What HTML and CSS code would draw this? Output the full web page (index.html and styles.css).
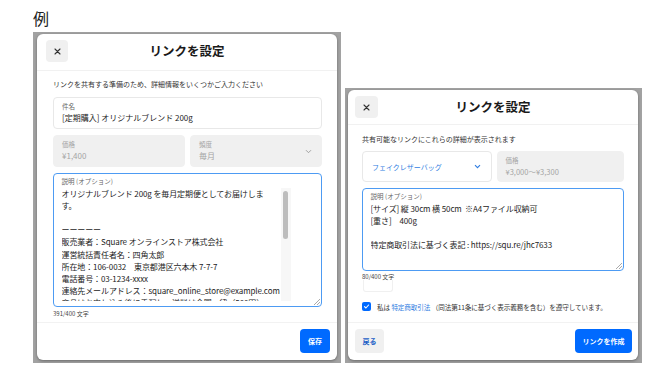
FILE: index.html
```html
<!DOCTYPE html>
<html lang="ja">
<head>
    <meta charset="UTF-8">
    <meta name="viewport" content="width=device-width, initial-scale=1.0">
    <title>リンクを設定</title>
    <link rel="stylesheet" href="styles.css">
</head>
<body>
    <div class="page">
        <div class="example-label">例</div>

        <div class="shots">
            <!-- subscription link -->
            <div class="shot shot-left">
                <div class="modal modal-left">
                    <div class="modal-header">
                        <button class="close-btn" type="button">
                            <svg width="7" height="7" viewBox="0 0 7 7"><path d="M1 1L6 6M6 1L1 6" stroke="#333" stroke-width="1.1" stroke-linecap="round"/></svg>
                        </button>
                        <h2 class="modal-title">リンクを設定</h2>
                    </div>

                    <div class="modal-body">
                        <p class="intro">リンクを共有する準備のため、詳細情報をいくつかご入力ください</p>

                        <div class="field">
                            <div class="field-label">件名</div>
                            <div class="field-value">[定期購入] オリジナルブレンド 200g</div>
                        </div>

                        <div class="field-row">
                            <div class="field field-disabled">
                                <div class="field-label">価格</div>
                                <div class="field-value">¥1,400</div>
                            </div>
                            <div class="field field-disabled field-select">
                                <div>
                                    <div class="field-label">頻度</div>
                                    <div class="field-value">毎月</div>
                                </div>
                                <svg class="chevron" width="7" height="5" viewBox="0 0 7 5"><path d="M1 1.2L3.5 3.7L6 1.2" fill="none" stroke="#999" stroke-width="0.9"/></svg>
                            </div>
                        </div>

                        <div class="textarea textarea-left">
                            <div class="field-label">説明 (オプション)</div>
                            <div class="textarea-scroll">
                                <div class="textarea-text">オリジナルブレンド 200g を毎月定期便としてお届けしま
す。

ーーーーー
販売業者：Square オンラインストア株式会社
運営統括責任者名：四角太郎
所在地：106-0032　東京都港区六本木 7-7-7
電話番号：03-1234-xxxx
連絡先メールアドレス：square_online_store@example.com
商品はお申し込み後に手配し、送料は全国一律（500円）</div>
                                <div class="scrollbar"><div class="scrollbar-thumb"></div></div>
                            </div>
                            <span class="resize-handle"></span>
                        </div>
                        <div class="char-count">391/400 文字</div>
                    </div>

                    <div class="modal-footer">
                        <button class="btn btn-primary btn-save" type="button">保存</button>
                    </div>
                </div>
            </div>

            <!-- product link -->
            <div class="shot shot-right">
                <div class="modal modal-right">
                    <div class="modal-header">
                        <button class="close-btn" type="button">
                            <svg width="7" height="7" viewBox="0 0 7 7"><path d="M1 1L6 6M6 1L1 6" stroke="#333" stroke-width="1.1" stroke-linecap="round"/></svg>
                        </button>
                        <h2 class="modal-title">リンクを設定</h2>
                    </div>

                    <div class="modal-body">
                        <p class="intro">共有可能なリンクにこれらの詳細が表示されます</p>

                        <div class="field-row product-row">
                            <div class="field field-select product-select">
                                <span class="select-text">フェイクレザーバッグ</span>
                                <svg class="chevron" width="7" height="5" viewBox="0 0 7 5"><path d="M1 1.2L3.5 3.7L6 1.2" fill="none" stroke="#2f7de1" stroke-width="1.1"/></svg>
                            </div>
                            <div class="field field-disabled product-price">
                                <div class="field-label">価格</div>
                                <div class="field-value">¥3,000〜¥3,300</div>
                            </div>
                        </div>

                        <div class="textarea textarea-right">
                            <div class="field-label">説明 (オプション)</div>
                            <div class="textarea-text">[サイズ] 縦 30cm 横 50cm  ※A4ファイル収納可
[重さ]　400g

特定商取引法に基づく表記 : https://squ.re/jhc7633</div>
                            <span class="resize-handle"></span>
                        </div>
                        <div class="char-count">80/400 文字</div>
                        <div class="empty-box"></div>

                        <label class="agree">
                            <span class="checkbox">
                                <svg width="7" height="7" viewBox="0 0 7 7"><path d="M1.5 3.6L2.9 5L5.6 2" fill="none" stroke="#fff" stroke-width="1.1" stroke-linecap="round" stroke-linejoin="round"/></svg>
                            </span>
                            <span class="agree-text">私は <span class="link">特定商取引法</span> （同法第11条に基づく表示義務を含む）を遵守しています。</span>
                        </label>
                    </div>

                    <div class="modal-footer modal-footer-split">
                        <button class="btn btn-secondary" type="button">戻る</button>
                        <button class="btn btn-primary btn-create" type="button">リンクを作成</button>
                    </div>
                </div>
            </div>
        </div>
    </div>
</body>
</html>
```

FILE: styles.css
```css
* {
    margin: 0;
    padding: 0;
    box-sizing: border-box;
    font-family: "Noto Sans CJK JP", "Noto Sans", sans-serif;
}

body {
    background: #fff;
    color: #1c1c1c;
}

.page {
    padding: 8px 0 0 33px;
}

.example-label {
    font-size: 16px;
    line-height: 20px;
    height: 20px;
    color: #222;
}

.shots {
    display: flex;
    align-items: flex-end;
    gap: 4px;
    margin-top: 4px;
}

/* grey backdrop around each captured modal */
.shot {
    background: #a2a2a2;
}

.shot-left {
    width: 308px;
    padding: 2px 4px 3px 4px;
}

.shot-right {
    width: 297px;
    padding: 2px 4px 3px 3px;
}

.modal {
    background: #fff;
    border-radius: 6px;
    box-shadow: 0 1px 3px rgba(0, 0, 0, 0.35);
    display: flex;
    flex-direction: column;
}

.modal-left {
    height: 326px;
}

.modal-right {
    height: 270px;
}

.modal-header {
    display: grid;
    grid-template-columns: 22px 1fr 22px;
    align-items: center;
    border-bottom: 1px solid #f1f1f1;
}

.modal-left .modal-header {
    padding: 6px 9px 8px;
}

.modal-right .modal-header {
    padding: 6px 7px 6px;
    grid-template-columns: 23px 1fr 23px;
}

.close-btn {
    width: 100%;
    height: 22px;
    border: none;
    border-radius: 4px;
    background: #f0f0f0;
    display: flex;
    align-items: center;
    justify-content: center;
}

.modal-title {
    text-align: center;
    font-size: 12.5px;
    font-weight: 700;
    line-height: 16px;
    color: #1a1a1a;
}

.modal-body {
    flex: 1;
    overflow: hidden;
}

.modal-left .modal-body {
    padding: 8px 15px 0 16px;
}

.modal-right .modal-body {
    padding: 9px 14px 0 14px;
}

.intro {
    font-size: 7px;
    line-height: 10px;
    color: #333;
}

.field {
    border: 1px solid #e8e8e8;
    border-radius: 4px;
    padding: 4px 8px;
}

.modal-left .intro + .field {
    margin-top: 8px;
}

.field-label {
    font-size: 6.5px;
    line-height: 9px;
    color: #666;
}

.field-value {
    font-size: 8px;
    line-height: 12px;
    margin-top: 1px;
    color: #1c1c1c;
}

.field-row {
    display: flex;
    gap: 5px;
    margin-top: 6px;
}

.field-row .field {
    flex: 1;
}

.field-disabled {
    background: #f0f0f0;
    border-color: #f0f0f0;
}

.field-disabled .field-label,
.field-disabled .field-value {
    color: #a5a5a5;
}

.field-select {
    display: flex;
    align-items: center;
    justify-content: space-between;
}

.field-select .chevron {
    margin-right: 1px;
}

.textarea {
    position: relative;
    margin-top: 6px;
    border: 1.5px solid #4d9bf3;
    border-radius: 4px;
}

.textarea-left {
    height: 134px;
    padding: 3px 30px 0 7.5px;
}

.textarea-scroll {
    display: flex;
    height: 113px;
    margin-top: 1.5px;
    overflow: hidden;
}

.textarea-text {
    flex: 1;
    font-size: 8px;
    line-height: 12.2px;
    letter-spacing: -0.1px;
    white-space: pre;
    overflow: hidden;
    color: #1c1c1c;
}

.scrollbar {
    width: 10px;
    padding: 3px 0 0 2px;
    background: #f7f7f7;
}

.scrollbar-thumb {
    width: 5px;
    height: 48px;
    border-radius: 3px;
    background: #bdbdbd;
}

.resize-handle {
    position: absolute;
    right: 1px;
    bottom: 1px;
    width: 6px;
    height: 6px;
    background: linear-gradient(135deg, transparent 45%, #aaa 45%, #aaa 55%, transparent 55%, transparent 72%, #aaa 72%, #aaa 82%, transparent 82%);
}

.char-count {
    font-size: 6px;
    line-height: 8px;
    margin-top: 3px;
    color: #444;
}

.modal-footer {
    border-top: 1px solid #f2f2f2;
    padding: 6px 7px 7px;
    display: flex;
    justify-content: flex-end;
}

.modal-footer-split {
    justify-content: space-between;
    padding: 6px 6px 7px 7px;
}

.btn {
    height: 24px;
    border: none;
    border-radius: 4px;
    font-size: 7px;
    font-weight: 700;
}

.btn-primary {
    background: #006aff;
    color: #fff;
}

.btn-secondary {
    background: #f0f0f0;
    color: #1b5fc6;
    width: 29px;
}

.btn-save {
    width: 30px;
}

.btn-create {
    width: 57px;
}

/* product link */

.product-row {
    margin-top: 7px;
}

.product-select {
    flex: 0 0 155px;
    height: 31px;
    padding: 0 9px;
}

.select-text {
    font-size: 7px;
    color: #2f7de1;
}

.product-price {
    height: 31px;
}

.product-price .field-value {
    font-size: 7.5px;
    line-height: 11px;
}

.textarea-right {
    height: 83px;
    padding: 3px 8px 0 7.5px;
}

.textarea-right .textarea-text {
    margin-top: 1.5px;
    line-height: 12px;
}

.textarea-right + .char-count {
    margin-top: 2px;
    line-height: 7px;
}

.empty-box {
    width: 30px;
    height: 12px;
    margin-left: 1px;
    border: 1px solid #f0f0f0;
    border-top: none;
    border-radius: 0 0 3px 3px;
}

.agree {
    display: flex;
    align-items: center;
    gap: 6px;
    margin-top: 9.5px;
    font-size: 6.6px;
    line-height: 10px;
    color: #333;
}

.agree-text {
    white-space: nowrap;
    letter-spacing: -0.1px;
}

.checkbox {
    flex: none;
    width: 9px;
    height: 9px;
    border-radius: 2px;
    background: #006aff;
    display: flex;
    align-items: center;
    justify-content: center;
}

.link {
    color: #2f7de1;
}
```
